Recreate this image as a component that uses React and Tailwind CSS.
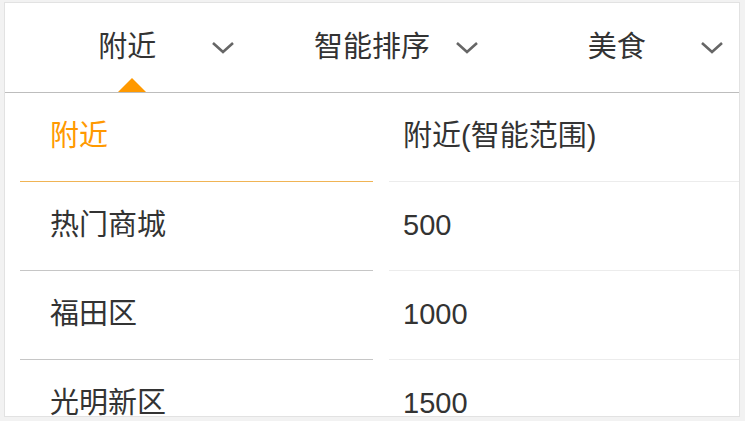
import { useState } from 'react'

const tabs = ['附近', '智能排序', '美食']
const areas = ['附近', '热门商城', '福田区', '光明新区']
const ranges = ['附近(智能范围)', '500', '1000', '1500']

const Chevron = () => (
    <svg width="24" height="14" viewBox="0 0 24 14" className="absolute right-[15px] top-[38px]">
        <polyline points="2,2 12,11 22,2" fill="none" stroke="#666" strokeWidth="2.6" />
    </svg>
)

export default function App() {
    const [active] = useState(0)

    return (
        <div className="min-h-[421px] bg-[#f2f2f2] pt-[2px] pl-[4px] font-['Liberation_Sans','Noto_Sans_CJK_SC',sans-serif] text-[#333]">
            <div className="w-[736px] h-[415px] bg-white border border-[#e2e2e2] overflow-hidden flex flex-col">
                {/* Tab header */}
                <div className="relative h-[90px] flex border-b-[1.5px] border-[#bdbdbd] shrink-0">
                    {tabs.map((t) => (
                        <div key={t} className="relative flex-1 flex items-center justify-center text-[29px]">
                            <span className="mt-[1px]">{t}</span>
                            <Chevron />
                        </div>
                    ))}
                    <div className="absolute left-[113px] bottom-0 w-0 h-0 border-l-[14px] border-r-[14px] border-b-[14px] border-l-transparent border-r-transparent border-b-[#ff9900]"></div>
                </div>

                {/* Dropdown body */}
                <div className="flex flex-1 text-[29px]">
                    <div className="w-[384px] pl-[15px] pr-[16px]">
                        {areas.map((a, i) => (
                            <div
                                key={a}
                                className={`h-[89px] flex items-center pl-[30px] border-b ${i === active ? 'text-[#ff9900] border-[#f0b455]' : 'border-[#c6c6c6]'}`}
                            >
                                {a}
                            </div>
                        ))}
                    </div>
                    <div className="flex-1">
                        {ranges.map((r) => (
                            <div key={r} className="h-[89px] flex items-center pl-[14px] border-b border-[#ececec]">
                                {r}
                            </div>
                        ))}
                    </div>
                </div>
            </div>
        </div>
    )
}
